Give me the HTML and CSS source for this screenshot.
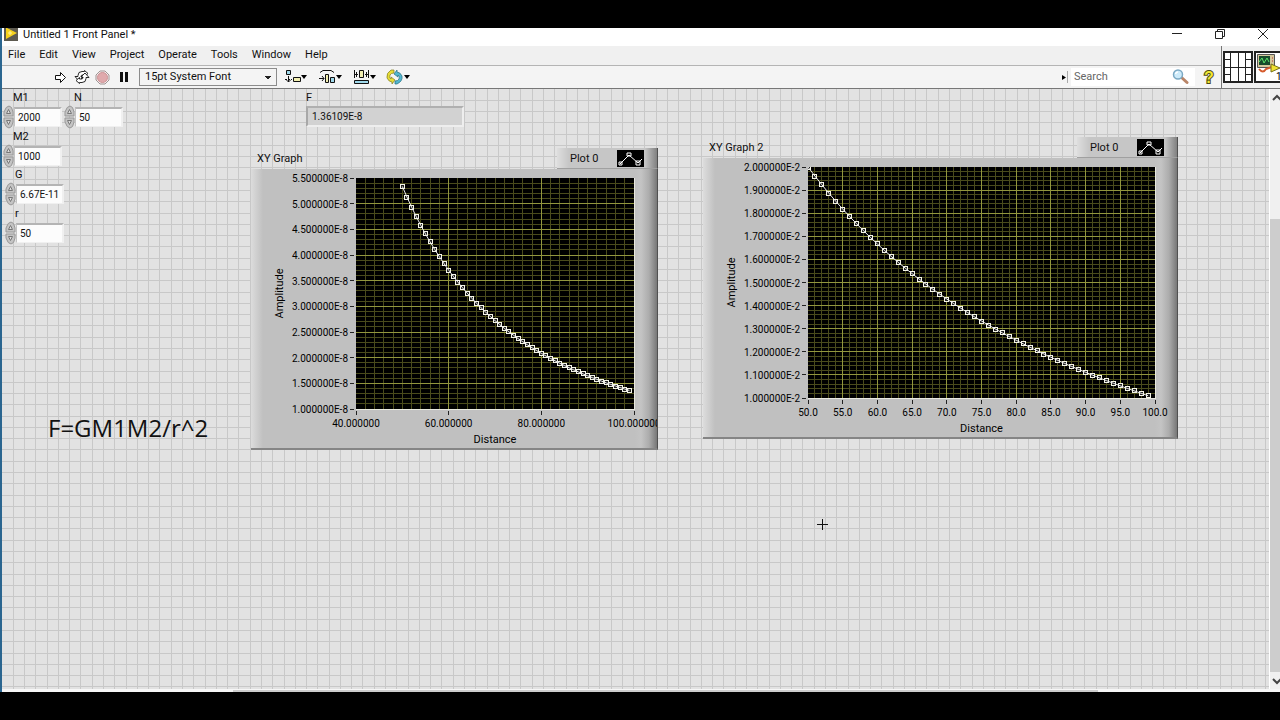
FILE: index.html
```html
<!DOCTYPE html>
<html lang="en">
<head>
    <meta charset="UTF-8">
    <meta name="viewport" content="width=device-width, initial-scale=1.0">
    <title>Untitled 1 Front Panel *</title>
    <link rel="stylesheet" href="styles.css">
</head>
<body>
    <div class="window">
        <header class="titlebar">
            <svg class="app-icon" width="14" height="13" viewBox="0 0 14 13">
                <rect width="14" height="13" fill="#5d5a50"/>
                <path d="M2 0v11l11-6L3 0z" fill="#f6d21c"/>
                <path d="M4 5h4M6 3v4" stroke="#fff3a0" stroke-width="1"/>
            </svg>
            <h1 class="title">Untitled 1 Front Panel *</h1>
            <div class="window-buttons">
                <button aria-label="Minimize"><svg width="12" height="12" viewBox="0 0 12 12"><path d="M1 5.500h10"/></svg></button>
                <button aria-label="Restore"><svg width="12" height="12" viewBox="0 0 12 12"><path d="M1.500 3.500h7v7h-7zM3.500 3.500v-2h7v7h-2"/></svg></button>
                <button aria-label="Close"><svg width="12" height="12" viewBox="0 0 12 12"><path d="M1 1l10 10M11 1L1 11"/></svg></button>
            </div>
        </header>

        <div class="header">
            <div class="header-main">
                <nav class="menubar">
                    <a href="#">File</a>
                    <a href="#">Edit</a>
                    <a href="#">View</a>
                    <a href="#">Project</a>
                    <a href="#">Operate</a>
                    <a href="#">Tools</a>
                    <a href="#">Window</a>
                    <a href="#">Help</a>
                </nav>
                <div class="toolbar">
                    <button class="tool" aria-label="Run">
                        <svg width="13" height="13" viewBox="0 0 13 13"><path d="M1.500 4.500h5v-3l5 5-5 5v-3h-5z" fill="#fff" stroke="#111"/></svg>
                    </button>
                    <button class="tool" aria-label="Run continuously">
                        <svg width="16" height="14" viewBox="0 0 16 14" fill="#fff" stroke="#111" stroke-width=".9">
                            <path d="M4 5.500Q4 1.500 8 1.500h2.500V.5l3.500 3-3.500 3V5H8.500Q7 5 7 6.500V7H9L5 11 1 6.500h3z"/>
                            <path d="M12 8.500Q12 12.500 8 12.500H5.500v1L2 10.500l3.500-3V9h2Q9 9 9 7.500V7H7l4-4 4 4.500h-3z"/>
                        </svg>
                    </button>
                    <button class="tool" aria-label="Abort">
                        <svg width="15" height="15" viewBox="0 0 15 15"><path d="M5 1h5l4 4v5l-4 4H5l-4-4V5z" fill="#f4eeee" stroke="#a09292"/><circle cx="7.500" cy="7.500" r="5" fill="#e0a9ac" stroke="#cd9295"/></svg>
                    </button>
                    <button class="tool" aria-label="Pause">
                        <svg width="10" height="12" viewBox="0 0 10 12"><path d="M1 1h3v10H1zM6 1h3v10H6z" fill="#111"/></svg>
                    </button>
                    <select class="font-select" aria-label="Text settings">
                        <option>15pt System Font</option>
                    </select>
                    <button class="tool-menu" aria-label="Align objects">
                        <svg width="24" height="16" viewBox="0 0 24 16">
                            <path d="M2.500 1.500h4v4h-4z" fill="#9fd8ea" stroke="#111"/><path d="M9.500 8.500h7v4h-7z" fill="#f2efb0" stroke="#111"/>
                            <path d="M1 10.500h7" stroke="#111" stroke-dasharray="2 1"/><path d="M4.500 7v6M2.500 11l2 2 2-2" fill="none" stroke="#111"/><path d="M17 6h6l-3 4z"/>
                        </svg>
                    </button>
                    <button class="tool-menu" aria-label="Distribute objects">
                        <svg width="24" height="16" viewBox="0 0 24 16">
                            <path d="M2 3.500l3-2h8l3 2" fill="none" stroke="#111"/><path d="M7.500 5.500h3v8h-3z" fill="#f2efb0" stroke="#111"/>
                            <path d="M12.500 8.500h4v5h-4z" fill="#9fd8ea" stroke="#111"/><path d="M1 9.500h5M4 7l2 2.500L4 12" fill="none" stroke="#111"/><path d="M18 6h6l-3 4z"/>
                        </svg>
                    </button>
                    <button class="tool-menu" aria-label="Resize objects">
                        <svg width="24" height="16" viewBox="0 0 24 16">
                            <path d="M7.500 1.500h4v7h-4z" fill="#f2efb0" stroke="#111"/><path d="M2.500 11.500h14v3h-14z" fill="#9fd8ea" stroke="#111"/>
                            <path d="M2.500 1v8M16.500 1v8M2 5.500h4M13 5.500h4M4.500 3v5M14.500 3v5" stroke="#111"/><path d="M18 6h6l-3 4z"/>
                        </svg>
                    </button>
                    <button class="tool-menu" aria-label="Reorder">
                        <svg width="24" height="16" viewBox="0 0 24 16">
                            <path d="M8 1H5Q0 4 1 9q2 4 5 4v2l3-4-4-3v2Q3 9 4 6q1-2 4-2z" fill="#e6dc36" stroke="#7e7b22" stroke-width=".7"/>
                            <path d="M9 15h2q6-3 5-8-2-4-5-4V1L8 5l4 3V6q2 1 1 4-1 2-4 2z" fill="#52b7d0" stroke="#276d80" stroke-width=".7"/><path d="M18 6h6l-3 4z"/>
                        </svg>
                    </button>
                    <div class="search">
                        <svg class="search-grip" width="9" height="12" viewBox="0 0 9 12"><path d="M0 4v5l4-2.500z"/><path d="M5.500 0v12" stroke="#aaa"/></svg>
                        <div class="search-box">
                            <input type="text" placeholder="Search" aria-label="Search">
                            <svg width="17" height="16" viewBox="0 0 17 16">
                                <path d="M9 8l6 5.500" stroke="#b98568" stroke-width="3" stroke-linecap="round"/>
                                <circle cx="6" cy="5.500" r="4.500" fill="#cdebfa" stroke="#7ba9c4" stroke-width="1.500"/>
                                <path d="M3.500 5Q4 3 6 3" fill="none" stroke="#fff" stroke-width="1.500"/>
                            </svg>
                        </div>
                        <button class="help-button" aria-label="Context help">
                            <svg width="14" height="18" viewBox="0 0 14 18"><text class="help-mark" x="7" y="15" text-anchor="middle">?</text></svg>
                        </button>
                    </div>
                </div>
            </div>
            <div class="vi-pane">
                <svg width="30" height="32" viewBox="0 0 30 32">
                    <path d="M1 1h28v30H1z" fill="#fff" stroke="#222" stroke-width="2"/>
                    <path d="M7.500 1v30M15.500 1v30M22.500 1v30M1 16.500h28M1 8.500h6M23 8.500h6M1 23.500h6M23 23.500h6" stroke="#222"/>
                </svg>
                <svg width="31" height="32" viewBox="0 0 31 32">
                    <path d="M1 1h31v30H1z" fill="#fff" stroke="#222" stroke-width="2"/>
                    <path d="M3.500 3.500h17v13h-17z" fill="#d3c79c" stroke="#555"/><path d="M5 5h11v9H5z" fill="#164b2b"/>
                    <path d="M5 11l3-4 2 5 3-5 2 4" fill="none" stroke="#5ce268"/>
                    <path d="M5 18q4 5 7 0l6-2" fill="none" stroke="#d65a2c" stroke-width="2"/>
                    <path d="M17 13v8l9-4z" fill="#f0e232" stroke="#77701a"/><path d="M18 7h1M18 10h1" stroke="#b33"/>
                    <text class="vi-number" x="22" y="29">1</text>
                </svg>
            </div>
        </div>

        <div class="workspace">
            <main class="panel">
                <svg class="panel-grid" id="panel-grid" aria-hidden="true"></svg>

                <div class="control control-m1">
                    <label for="m1">M1</label>
                    <div class="numeric"><span class="spinner"></span><input id="m1" type="text" value="2000"></div>
                </div>
                <div class="control control-n">
                    <label for="n">N</label>
                    <div class="numeric"><span class="spinner"></span><input id="n" type="text" value="50"></div>
                </div>
                <div class="control control-m2">
                    <label for="m2">M2</label>
                    <div class="numeric"><span class="spinner"></span><input id="m2" type="text" value="1000"></div>
                </div>
                <div class="control control-g">
                    <label for="g">G</label>
                    <div class="numeric"><span class="spinner"></span><input id="g" type="text" value="6.67E-11"></div>
                </div>
                <div class="control control-r">
                    <label for="r">r</label>
                    <div class="numeric"><span class="spinner"></span><input id="r" type="text" value="50"></div>
                </div>
                <div class="indicator">
                    <label for="f">F</label>
                    <input id="f" type="text" value="1.36109E-8" readonly>
                </div>

                <p class="formula">F=GM1M2/r^2</p>

                <section class="graph graph-force">
                    <div class="graph-head">
                        <h2>XY Graph</h2>
                        <div class="legend">
                            <span>Plot 0</span>
                            <svg width="27" height="17" viewBox="0 0 27 17"><rect width="27" height="17"/><path d="M3 14l9-9 9 8 4-4M2 12h3v3H2zM10 3h4v3h-4zM19 11h4v4h-4z"/></svg>
                        </div>
                    </div>
                    <svg class="chart" id="chart-force" role="img" aria-label="XY Graph"></svg>
                </section>

                <section class="graph graph-inverse">
                    <div class="graph-head">
                        <h2>XY Graph 2</h2>
                        <div class="legend">
                            <span>Plot 0</span>
                            <svg width="27" height="17" viewBox="0 0 27 17"><rect width="27" height="17"/><path d="M3 14l9-9 9 8 4-4M2 12h3v3H2zM10 3h4v3h-4zM19 11h4v4h-4z"/></svg>
                        </div>
                    </div>
                    <svg class="chart" id="chart-inverse" role="img" aria-label="XY Graph 2"></svg>
                </section>

                <svg class="crosshair" width="11" height="11" viewBox="0 0 11 11"><path d="M5.500 0v11M0 5.500h11" stroke="#111"/></svg>
            </main>
            <div class="vscroll">
                <button aria-label="Scroll up"><svg width="10" height="8" viewBox="0 0 10 8"><path d="M3 6l4-4 4 4"/></svg></button>
                <div class="vscroll-track"><div class="vscroll-thumb"></div></div>
                <button aria-label="Scroll down"><svg width="10" height="8" viewBox="0 0 10 8"><path d="M3 2l4 4 4-4"/></svg></button>
            </div>
        </div>
        <div class="hscroll"><div class="hscroll-thumb"></div></div>
    </div>

    <script src="script.js"></script>
</body>
</html>
```

FILE: styles.css
```css
* {
    box-sizing: border-box;
    margin: 0;
    padding: 0;
}

body {
    height: 100vh;
    padding: 28px 0;
    background: #000;
    color: #111;
    font: 11px/14px Roboto, "Open Sans", sans-serif;
    overflow: hidden;
}

button {
    display: flex;
    align-items: center;
    justify-content: center;
    border: 0;
    background: none;
}

input,
select {
    font: inherit;
    color: inherit;
    border: 0;
    border-radius: 0;
    outline: none;
}

.window {
    display: flex;
    flex-direction: column;
    height: 100%;
    border-left: 2px solid #2b6690;
    background: #f0f0f0;
    overflow: hidden;
}

/* Title bar */
.titlebar {
    display: flex;
    flex: none;
    height: 18px;
    padding-left: 2px;
    background: #fff;
}

.title {
    flex: 1;
    margin-left: 5px;
    font-size: 11px;
    font-weight: normal;
}

.window-buttons {
    display: flex;
    height: 12px;
    margin-right: -4px;
}

.window-buttons button {
    width: 43px;
}

.window-buttons path {
    fill: none;
    stroke: #222;
}

/* Menu and toolbar */
.header {
    display: flex;
    flex: none;
    height: 43px;
    border-bottom: 1px solid #777;
}

.header-main {
    flex: 1;
}

.menubar {
    display: flex;
    gap: 14px;
    height: 20px;
    padding: 2px 6px;
    border-bottom: 1px solid #b4b4b4;
}

.menubar a {
    color: inherit;
    text-decoration: none;
}

.toolbar {
    display: flex;
    align-items: center;
    height: 22px;
    padding-left: 48px;
    background: #f4f4f4;
}

.tool {
    width: 21px;
}

.tool-menu {
    width: 34px;
}

.font-select {
    width: 138px;
    height: 18px;
    margin: 0 2px 0 5px;
    padding: 0 5px;
    appearance: none;
    border: 1px solid #8c8c8c;
    background: linear-gradient(45deg, transparent 50%, #222 50%) 124px 7px / 4px 4px no-repeat,
        linear-gradient(-45deg, transparent 50%, #222 50%) 128px 7px / 4px 4px no-repeat,
        #f4f4f4;
}

.search {
    display: flex;
    align-items: center;
    margin-left: auto;
    padding-right: 5px;
}

.search-box {
    display: flex;
    align-items: center;
    width: 124px;
    height: 18px;
    margin-right: 7px;
    padding: 0 6px 0 3px;
    background: #fff;
}

.search-box input {
    flex: 1;
    min-width: 0;
    background: none;
}

.search-box input::placeholder {
    color: #666;
    opacity: 1;
}

.help-mark {
    fill: #f1e834;
    stroke: #4d4a12;
    stroke-width: 2px;
    paint-order: stroke;
    font-size: 16px;
    font-weight: bold;
}

.vi-pane {
    display: flex;
    flex: none;
    gap: 1px;
    align-items: center;
    width: 59px;
    padding-left: 1px;
    border-left: 1px solid #777;
    overflow: hidden;
}

.vi-pane svg {
    flex: none;
}

.vi-number {
    font-size: 10px;
}

/* Front panel */
.workspace {
    display: flex;
    flex: 1;
    min-height: 0;
}

.panel {
    position: relative;
    flex: 1;
    background: #e2e2e2;
    overflow: hidden;
}

.panel-grid {
    position: absolute;
    width: 100%;
    height: 100%;
}

.panel-grid path {
    fill: none;
    stroke: #c8c8c8;
}

.control,
.indicator,
.graph,
.formula,
.crosshair {
    position: absolute;
}

.control label,
.indicator label {
    display: block;
    height: 17px;
    line-height: 18px;
}

.control label {
    padding-left: 10px;
}

.numeric {
    display: flex;
    align-items: center;
    height: 22px;
}

.spinner {
    display: flex;
    flex: none;
    width: 11px;
}

.control input {
    width: 48px;
    height: 20px;
    padding: 0 3px;
    border: solid;
    border-width: 2px 2px 1px 1px;
    border-color: #b4b4b4 #f0f0f0 #f0f0f0 #c4c4c4;
    background: #fcfcfc;
    font-size: 10px;
}

.control-m1 {
    left: 1px;
    top: 0;
}

.control-n {
    left: 62px;
    top: 0;
}

.control-m2 {
    left: 1px;
    top: 39px;
}

.control-g {
    left: 3px;
    top: 77px;
}

.control-r {
    left: 3px;
    top: 116px;
}

.indicator {
    left: 304px;
    top: 0;
}

.indicator input {
    display: block;
    width: 158px;
    height: 21px;
    padding: 0 4px;
    border: 2px solid;
    border-color: #b0b0b0 #eee #eee #a8a8a8;
    background: #d2d2d2;
    font-size: 10px;
}

.formula {
    left: 46px;
    top: 323px;
    font: 24px/32px "Open Sans", sans-serif;
}

.crosshair {
    left: 815px;
    top: 430px;
}

/* Graphs */
.graph-force {
    left: 249px;
    top: 59px;
    width: 407px;
}

.graph-inverse {
    left: 701px;
    top: 48px;
    width: 475px;
}

.graph-head {
    display: flex;
    justify-content: space-between;
    height: 21px;
}

.graph-head h2 {
    padding: 4px 6px;
    font-size: 11px;
    font-weight: normal;
}

.legend {
    display: flex;
    align-items: center;
    justify-content: space-between;
    width: 101px;
    padding: 1px 13px 0;
    border-bottom: 1px solid #a0a0a0;
    border-right: 1px solid #505050;
    background: linear-gradient(to right, #dedede, #c6c6c6 12px, #c6c6c6 88px, #808080);
}

.legend path {
    fill: none;
    stroke: #fff;
}

.chart {
    display: block;
    width: 100%;
    height: 281px;
    border-right: 1px solid #505050;
    border-bottom: 2px solid #858585;
    background: linear-gradient(to right, #dcdcdc, #c0c0c0 12px, transparent 12px),
        linear-gradient(to left, #777, #acacac 8px, #c4c4c4 16px, #c0c0c0 22px);
}

.chart .minor {
    stroke: #4a4b1c;
}

.chart .major {
    stroke: #92963e;
}

.chart .tick {
    stroke: #222;
}

.chart .curve {
    fill: none;
    stroke: #eee;
}

.chart .marker {
    fill: #222;
    stroke: #f4f4e8;
}

.chart .tick-label {
    font-size: 10px;
}

/* Scrollbars */
.vscroll {
    display: flex;
    flex-direction: column;
    flex: none;
    width: 11px;
    border-left: 1px solid #fff;
    background: #f0f0f0;
}

.vscroll button {
    height: 17px;
}

.vscroll path {
    fill: none;
    stroke: #444;
    stroke-width: 2px;
}

.vscroll-track {
    display: flex;
    flex: 1;
    align-items: flex-end;
}

.vscroll-thumb {
    width: 100%;
    height: 80%;
    background: #cdcdcd;
}

.hscroll {
    flex: none;
    height: 3px;
    padding: 1px 182px 0 231px;
    background: #f6f6f6;
}

.hscroll-thumb {
    height: 2px;
    background: #cdcdcd;
}
```

FILE: script.js
```js
// background grid of the front panel
function drawPanelGrid() {
    const grid = document.getElementById('panel-grid');
    const step = 11.28;
    let d = '';
    for (let i = 1; i * step < grid.clientWidth; i++) {
        d += `M${Math.floor(i * step) + 0.5} 0V${grid.clientHeight}`;
    }
    for (let i = 1; i * step < grid.clientHeight; i++) {
        d += `M0 ${Math.floor(i * step) + 0.5}H${grid.clientWidth}`;
    }
    grid.innerHTML = `<path d="${d}"/>`;
}

function drawSpinners() {
    document.querySelectorAll('.spinner').forEach(spinner => {
        spinner.innerHTML = `<svg width="11" height="24" viewBox="0 0 11 24">
            <path d="M1 11V7Q3 1 6 1q3 0 4 6v4z" fill="#c4c4c4" stroke="#999"/>
            <path d="M1 13v4q2 6 5 6 3 0 4-6v-4z" fill="#c4c4c4" stroke="#999"/>
            <path d="M3.500 8.500h4L5.500 4.500zM3.500 15.500h4l-2 4z" fill="#ddd" stroke="#777"/>
        </svg>`;
    });
}

function drawChart(id, o) {
    const px = x => o.left + (x - o.xMin) / (o.xMax - o.xMin) * o.width;
    const py = y => o.top + o.height - (y - o.yMin) / (o.yMax - o.yMin) * o.height;
    const snap = v => Math.floor(v) + 0.5;
    const right = o.left + o.width;
    const bottom = o.top + o.height;
    const vline = (x, cls) => `<path class="${cls}" d="M${snap(px(x))} ${o.top}V${bottom}"/>`;
    const hline = (y, cls) => `<path class="${cls}" d="M${o.left} ${snap(py(y))}H${right}"/>`;
    let minor = '';
    let major = '';
    let axes = '';

    const xCount = Math.round((o.xMax - o.xMin) / o.xMinor);
    for (let i = 1; i < xCount; i++) {
        minor += vline(o.xMin + i * o.xMinor, 'minor');
    }
    const yCount = Math.round((o.yMax - o.yMin) / o.yMinor);
    for (let i = 1; i < yCount; i++) {
        minor += hline(o.yMin + i * o.yMinor, 'minor');
    }

    for (let x = o.xMin; x <= o.xMax; x += o.xMajor) {
        if (x > o.xMin && x < o.xMax) major += vline(x, 'major');
        axes += `<path class="tick" d="M${snap(px(x))} ${bottom + 2}v4"/>`;
        axes += `<text class="tick-label" x="${px(x)}" y="${bottom + 18}" text-anchor="middle">${x.toFixed(o.xDigits)}</text>`;
    }
    const rows = Math.round((o.yMax - o.yMin) / o.yMajor);
    for (let i = 0; i <= rows; i++) {
        const y = o.yMin + i * o.yMajor;
        if (i > 0 && i < rows) major += hline(y, 'major');
        axes += `<path class="tick" d="M${o.left - 6} ${snap(py(y))}h4"/>`;
        axes += `<text class="tick-label" x="${o.left - 8}" y="${Math.round(py(y)) + 4}" text-anchor="end">${y.toFixed(6)}${o.exponent}</text>`;
    }

    let points = '';
    let markers = '';
    for (let r = 50; r < 100; r++) {
        const x = px(r);
        const y = py(o.fn(r));
        points += `${x},${y} `;
        markers += `<rect class="marker" x="${snap(x - 2)}" y="${snap(y - 2)}" width="4" height="4"/>`;
    }

    document.getElementById(id).innerHTML = `
        <clipPath id="${id}-clip"><rect x="${o.left}" y="${o.top}" width="${o.width}" height="${o.height}"/></clipPath>
        <rect x="${o.left}" y="${o.top}" width="${o.width + 1}" height="${o.height + 1}" fill="#e8e8e0"/>
        <rect x="${o.left}" y="${o.top}" width="${o.width}" height="${o.height}"/>
        ${minor}${major}${axes}
        <g clip-path="url(#${id}-clip)">${markers}<polyline class="curve" points="${points}"/></g>
        <text x="${o.left + o.width / 2}" y="${bottom + 34}" text-anchor="middle">Distance</text>
        <text transform="translate(${o.labelX} ${o.top + o.height / 2}) rotate(-90)" text-anchor="middle">Amplitude</text>`;
}

drawPanelGrid();
window.addEventListener('resize', drawPanelGrid);
drawSpinners();

drawChart('chart-force', {
    left: 105, top: 9, width: 278, height: 231, labelX: 32,
    xMin: 40, xMax: 100, xMajor: 20, xMinor: 2, xDigits: 6,
    yMin: 1, yMax: 5.5, yMajor: 0.5, yMinor: 0.1, exponent: 'E-8',
    fn: r => 6.67 * 2000 / (r * r)
});

drawChart('chart-inverse', {
    left: 105, top: 9, width: 347, height: 231, labelX: 32,
    xMin: 50, xMax: 100, xMajor: 5, xMinor: 1, xDigits: 1,
    yMin: 1, yMax: 2, yMajor: 0.1, yMinor: 0.02, exponent: 'E-2',
    fn: r => 100 / r
});
```
